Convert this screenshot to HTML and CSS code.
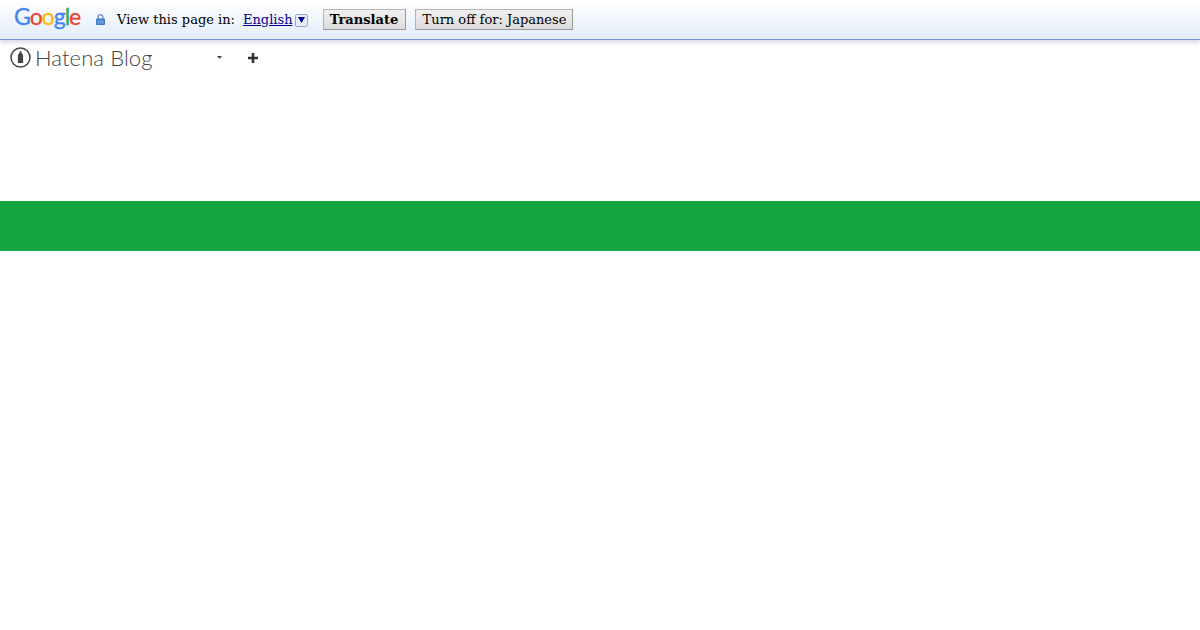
FILE: index.html
```html
<!DOCTYPE html>
<html lang="en">
<head>
<meta charset="utf-8">
<title>Hatena Blog</title>
<link rel="stylesheet" href="styles.css">
</head>
<body>
<div class="translate-bar">
  <div class="google-logo"><span class="g-blue">G</span><span class="g-red">o</span><span class="g-yellow">o</span><span class="g-blue">g</span><span class="g-green">l</span><span class="g-red">e</span></div>
  <svg class="lock" width="9" height="11" viewBox="0 0 9 11"><path d="M2 5V3.200a2.500 2.500 0 0 1 5 0V5" fill="none" stroke="#5a86c8" stroke-width="1.200"/><rect x="0" y="4.500" width="9" height="6.500" rx="1" fill="#3f78c8"/><path d="M1 7h7M1 9h7" stroke="#a9c6ee" stroke-width=".7"/></svg>
  <span class="label">View this page in:</span>
  <a class="lang" href="#">English</a>
  <span class="lang-arrow"><svg width="7" height="6" viewBox="0 0 7 6"><path d="M0 0h7L3.500 6z" fill="#00008b"/></svg></span>
  <button class="btn btn-primary">Translate</button>
  <button class="btn btn-off">Turn off for: Japanese</button>
</div>
<div class="hatena-bar">
  <svg class="hatena-icon" width="21" height="21" viewBox="0 0 21 21"><circle cx="10.500" cy="10.500" r="9.500" fill="none" stroke="#444" stroke-width="1.500"/><path d="M10.500 4c.9 0 1 1 1 2 1 .7 1.600 1.500 1.600 2.600V16H7.900V8.600C7.900 7.500 8.500 6.700 9.500 6c0-1 .1-2 1-2z" fill="#444"/></svg>
  <span class="hatena-name">Hatena Blog</span>
  <svg class="caret" width="5" height="3" viewBox="0 0 5 3"><path d="M0 0h5L2.500 3z" fill="#444"/></svg>
  <svg class="plus" width="10" height="10" viewBox="0 0 10 10"><path d="M5 0v10M0 5h10" stroke="#333" stroke-width="2.600"/></svg>
</div>
<div class="band"></div>
</body>
</html>
```
FILE: styles.css
```css
html, body { margin: 0; padding: 0; background: #fff; }
body { height: 630px; overflow: hidden; }
.translate-bar {
  box-sizing: border-box;
  height: 40px;
  display: flex;
  align-items: center;
  padding: 0 0 1px 14px;
  background: linear-gradient(#ffffff, #e3ecf8);
  border-bottom: 1px solid #6f96d6;
  box-shadow: 0 2px 5px rgba(90, 110, 140, .3);
  font: 13px "DejaVu Serif", serif;
  color: #000;
  position: relative;
}
.google-logo {
  width: 68px;
  font: 400 23px/26px "Lato", sans-serif;
  letter-spacing: -1px;
  -webkit-text-stroke: .3px;
  margin-top: -6px;
  white-space: nowrap;
}
.g-blue { color: #4285f4; }
.g-red { color: #ea4335; }
.g-yellow { color: #fbbc05; }
.g-green { color: #34a853; }
.lock { margin-left: 14px; }
.label { margin-left: 12px; }
.lang { margin-left: 8px; color: #00008b; text-decoration: underline; }
.lang-arrow {
  box-sizing: border-box;
  width: 13px;
  height: 13px;
  margin: 2px 0 0 2px;
  display: flex;
  align-items: center;
  justify-content: center;
  background: #e6eefa;
  border: 1px solid #8fa9d0;
  border-radius: 2px;
}
.btn {
  box-sizing: border-box;
  height: 21px;
  padding: 0 6px;
  font: 13px "DejaVu Serif", serif;
  color: #000;
  white-space: nowrap;
  background: linear-gradient(#f0f0f0, #dcdcdc);
  border: 1px solid #b4b4b4;
  border-bottom-color: #999;
  border-right-color: #999;
}
.btn-primary { margin-left: 15px; width: 83px; font-weight: 700; }
.btn-off { margin-left: 9px; width: 158px; padding: 0 4px 0 6px; }
.hatena-bar {
  height: 37px;
  display: flex;
  align-items: center;
  padding: 0 0 2px 10px;
  box-sizing: border-box;
  color: #444;
}
.hatena-icon { flex: none; }
.hatena-name {
  width: 120px;
  margin-left: 4px;
  font: 300 22px/35px "Lato", sans-serif;
  letter-spacing: .1px;
}
.caret { margin-left: 62px; }
.plus { margin-left: 26px; }
.band { height: 50px; margin-top: 124px; background: #16a641; }
```
